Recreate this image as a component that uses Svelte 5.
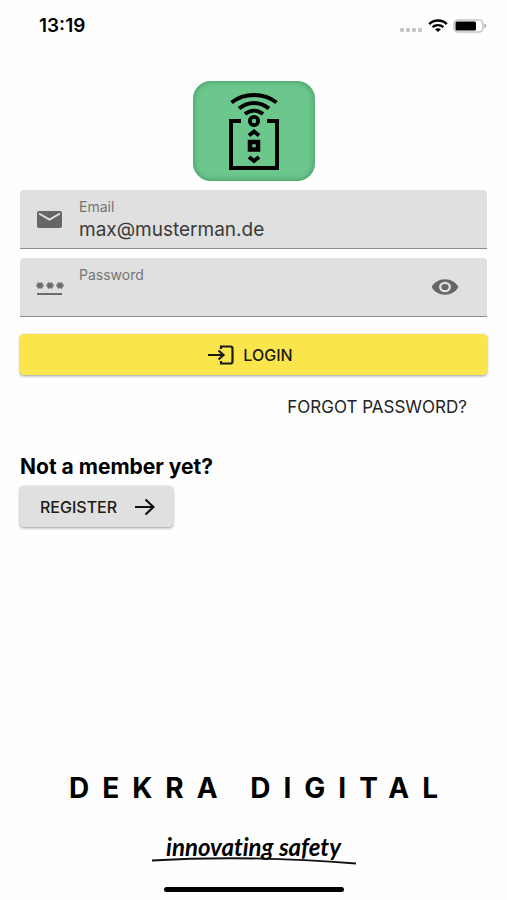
<script lang="ts">
  let email = $state('max@musterman.de');
  let password = $state('');
  let showPassword = $state(false);
</script>

<div class="screen">
  <header class="status">
    <span class="time">13:19</span>
    <div class="indicators">
      <svg width="24" height="16" viewBox="0 0 24 16" fill="#c8c8c8" aria-hidden="true">
        <rect x="1" y="10" width="4" height="4" rx="1" />
        <rect x="7" y="10" width="4" height="4" rx="1" />
        <rect x="13" y="10" width="4" height="4" rx="1" />
        <rect x="19" y="10" width="4" height="4" rx="1" />
      </svg>
      <svg width="20" height="16" viewBox="0 0 20 16" fill="none" stroke="#000" stroke-width="2.4" aria-hidden="true">
        <path d="M1.2 6.2C6 1.3 14 1.3 18.8 6.2" />
        <path d="M4.6 9.2C7.6 6.4 12.4 6.4 15.4 9.2" />
        <path d="M7 11.3C8.7 9.8 11.3 9.8 13 11.3L10 14Z" fill="#000" stroke="none" />
      </svg>
      <svg width="34" height="16" viewBox="0 0 34 16" aria-hidden="true">
        <rect x="1" y="2" width="29" height="12" rx="4" fill="#fff" stroke="#c4c4c4" stroke-width="1.6" />
        <rect x="2.5" y="3.6" width="20.5" height="8.8" rx="1.5" fill="#000" />
        <path d="M31.4 5.8C34 6.4 34 9.6 31.4 10.2Z" fill="#a8a8a8" />
      </svg>
    </div>
  </header>

  <main>
    <div class="app-logo">
      <svg width="122" height="100" viewBox="0 0 122 100" fill="none" stroke="#000" aria-hidden="true">
        <path d="M38.5 21.5C51 11.5 71 11.5 83.5 21.5" stroke-width="4" />
        <path d="M46 27.5C55 20 67 20 76 27.5" stroke-width="4" />
        <path d="M52 33C57.5 28.5 64.5 28.5 70 33" stroke-width="4" />
        <circle cx="61" cy="40" r="4.2" stroke-width="3.8" />
        <path d="M48 40H38V87H84V40H74" stroke-width="4" />
        <path d="M56 54.5L61 50.5L66 54.5" stroke-width="4" />
        <rect x="57" y="61" width="8" height="7.5" stroke-width="4.5" />
        <path d="M56 76L61 80L66 76" stroke-width="4" />
      </svg>
    </div>

    <form onsubmit={(e) => e.preventDefault()}>
      <div class="field">
        <svg width="28" height="24" viewBox="0 0 28 24" aria-hidden="true">
          <rect x="1" y="4" width="25" height="17" rx="2" fill="#666" />
          <path d="M3 6.5L13.5 12.5L24 6.5" fill="none" stroke="#e0e0e0" stroke-width="2" />
        </svg>
        <div class="control">
          <label for="email">Email</label>
          <input id="email" type="email" bind:value={email} />
        </div>
      </div>

      <div class="field">
        <svg width="28" height="24" viewBox="0 0 28 24" fill="none" stroke="#6b6b6b" aria-hidden="true">
          {#each [4, 14, 24] as x}
            <path
              d="M{x - 3.8} 10.5H{x + 3.8}M{x - 2} 7.6L{x + 2} 13.4M{x + 2} 7.6L{x - 2} 13.4"
              stroke-width="2.2"
            />
          {/each}
          <path d="M1 19H26" stroke-width="2" />
        </svg>
        <div class="control">
          <label for="password">Password</label>
          <input id="password" type={showPassword ? 'text' : 'password'} bind:value={password} />
        </div>
        <button
          class="eye"
          type="button"
          aria-label="Show password"
          onclick={() => (showPassword = !showPassword)}
        >
          <svg width="28" height="18" viewBox="0 0 28 18" aria-hidden="true">
            <path
              fill="#666"
              fill-rule="evenodd"
              d="M14 1.3C8 1.3 3 4.4 .7 9C3 13.6 8 16.7 14 16.7S25 13.6 27.3 9C25 4.4 20 1.3 14 1.3ZM14 14.2A6 5.2 0 1 1 14 3.8A6 5.2 0 1 1 14 14.2ZM14 5.9A3.6 3.1 0 1 0 14 12.1A3.6 3.1 0 1 0 14 5.9Z"
            />
          </svg>
        </button>
      </div>

      <button class="btn login" type="submit">
        <svg width="26" height="20" viewBox="0 0 26 20" fill="none" stroke="#1a1a12" stroke-width="2.2" aria-hidden="true">
          <path d="M0 10H15M10.5 5.5L15.5 10L10.5 14.5" />
          <path d="M13 4V1.5H22.5Q24.5 1.5 24.5 3.5V16.5Q24.5 18.5 22.5 18.5H13V16" />
        </svg>
        LOGIN
      </button>
      <a class="forgot" href="#forgot">FORGOT PASSWORD?</a>
    </form>

    <section class="join">
      <h2>Not a member yet?</h2>
      <button class="btn register" type="button">
        REGISTER
        <svg width="20" height="18" viewBox="0 0 20 18" fill="none" stroke="#111" stroke-width="2.2" aria-hidden="true">
          <path d="M0 9H18M10.5 1.5L18.5 9L10.5 16.5" />
        </svg>
      </button>
    </section>
  </main>

  <footer>
    <div class="brand">DEKRA DIGITAL</div>
    <div class="claim">
      <span>innovating safety</span>
      <svg width="206" height="8" viewBox="0 0 206 8" fill="none" stroke="#111" aria-hidden="true">
        <path d="M1 3.5C60 0 130 .5 205 6.5" stroke-width="1.8" />
      </svg>
    </div>
    <div class="home-bar"></div>
  </footer>
</div>

<style>
  :global(body) {
    margin: 0;
    background: #fefefe;
  }

  .screen {
    display: flex;
    flex-direction: column;
    box-sizing: border-box;
    min-height: 100vh;
    padding-bottom: 8px;
    font-family: Inter, Roboto, sans-serif;
    color: #000;
  }

  .status {
    display: flex;
    align-items: center;
    justify-content: space-between;
    padding: 16px 20px 0 39px;
    height: 20px;
  }

  .time {
    font-size: 19px;
    line-height: 20px;
    font-weight: 600;
  }

  .indicators {
    display: flex;
    align-items: center;
    gap: 5px;
  }

  main {
    display: flex;
    flex-direction: column;
    flex: 1;
    padding: 45px 20px 0;
  }

  .app-logo {
    align-self: center;
    height: 100px;
    border-radius: 18px;
    background: #6bc78c;
    box-shadow: inset 0 0 6px rgba(20, 90, 50, 0.5);
  }

  svg {
    display: block;
    flex: none;
  }

  form {
    display: flex;
    flex-direction: column;
    gap: 9px;
    padding-top: 9px;
  }

  .field {
    display: flex;
    align-items: center;
    gap: 15px;
    box-sizing: border-box;
    height: 59px;
    padding: 0 28px 0 16px;
    border-bottom: 1px solid #8c8c8c;
    border-radius: 4px 4px 0 0;
    background: #e0e0e0;
  }

  .control {
    display: flex;
    flex: 1;
    flex-direction: column;
    min-width: 0;
    padding-top: 4px;
  }

  label {
    font-size: 14px;
    line-height: 16px;
    color: #757575;
  }

  input {
    width: 100%;
    height: 28px;
    padding: 0;
    border: 0;
    outline: 0;
    background: transparent;
    font: inherit;
    font-size: 19px;
    color: #3a3a3a;
  }

  .eye {
    padding: 0;
    border: 0;
    background: none;
    cursor: pointer;
  }

  .btn {
    display: flex;
    align-items: center;
    justify-content: center;
    height: 41px;
    border: 0;
    border-radius: 4px;
    box-shadow: 0 1px 3px rgba(0, 0, 0, 0.4);
    font: inherit;
    font-size: 16px;
    font-weight: 500;
    color: #1a1a12;
    cursor: pointer;
  }

  .login {
    gap: 9px;
    margin-top: 8px;
    padding: 0 12px 0 6px;
    background: #fbe54d;
  }

  .forgot {
    align-self: flex-end;
    margin: 13px 20px 0 0;
    font-size: 17px;
    line-height: 20px;
    color: #222;
    text-decoration: none;
  }

  .join {
    padding-top: 38px;
  }

  h2 {
    margin: 0 0 7px;
    font-size: 21px;
    line-height: 24px;
    font-weight: 700;
  }

  .register {
    gap: 18px;
    padding: 0 18px 0 20px;
    background: #e0e0e0;
  }

  footer {
    display: flex;
    flex-direction: column;
    align-items: center;
  }

  .brand {
    padding-left: 13px;
    font-size: 28px;
    line-height: 32px;
    font-weight: 700;
    letter-spacing: 13px;
    white-space: nowrap;
  }

  .claim {
    display: flex;
    flex-direction: column;
    align-items: center;
    padding: 29px 0 22px;
  }

  .claim span {
    margin-bottom: -4px;
    font-family: Lato, sans-serif;
    font-size: 24px;
    line-height: 28px;
    font-style: italic;
    font-weight: 700;
    font-variant-ligatures: none;
  }

  .home-bar {
    width: 180px;
    height: 5px;
    border-radius: 3px;
    background: #000;
  }
</style>
